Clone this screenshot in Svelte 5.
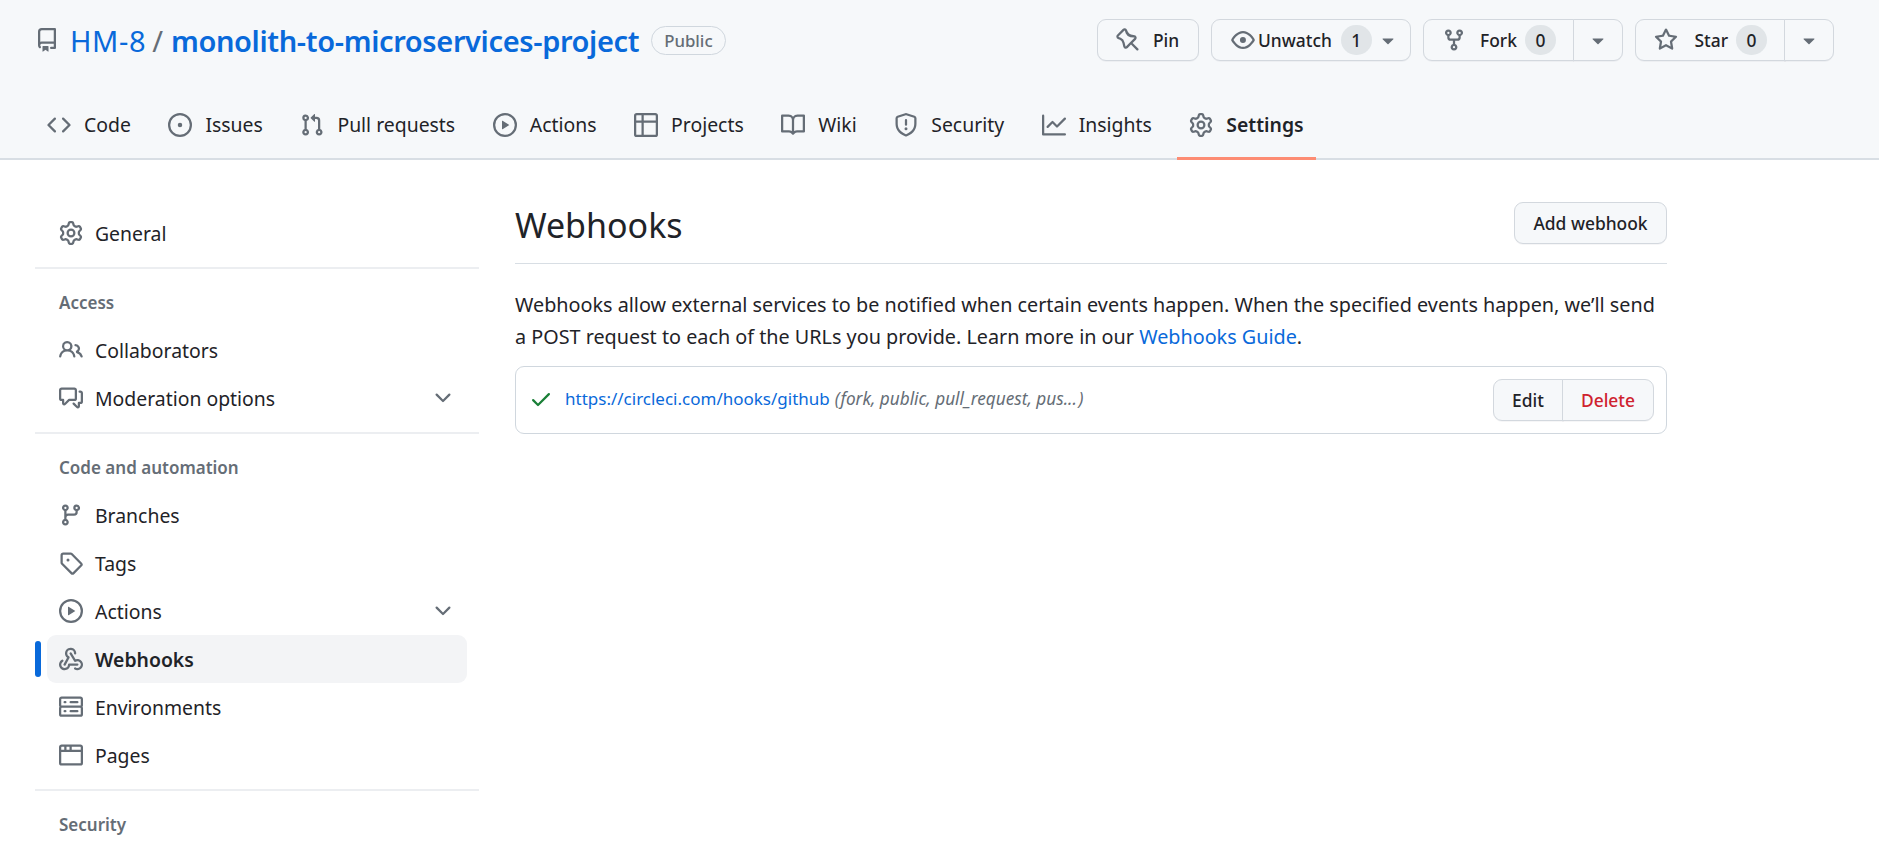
<script>
  const icons = {
    repo: 'M2 2.5A2.5 2.5 0 0 1 4.5 0h8.75a.75.75 0 0 1 .75.75v12.5a.75.75 0 0 1-.75.75h-2.5a.75.75 0 0 1 0-1.5h1.75v-2h-8a1 1 0 0 0-.714 1.7.75.75 0 1 1-1.072 1.05A2.495 2.495 0 0 1 2 11.5Zm10.5-1h-8a1 1 0 0 0-1 1v6.708A2.486 2.486 0 0 1 4.5 9h8ZM5 12.25a.25.25 0 0 1 .25-.25h3.5a.25.25 0 0 1 .25.25v3.25a.25.25 0 0 1-.4.2l-1.45-1.087a.249.249 0 0 0-.3 0L5.4 15.7a.25.25 0 0 1-.4-.2Z',
    code: 'm11.28 3.22 4.25 4.25a.75.75 0 0 1 0 1.06l-4.25 4.25a.749.749 0 0 1-1.275-.326.749.749 0 0 1 .215-.734L13.94 8l-3.72-3.72a.749.749 0 0 1 .326-1.275.749.749 0 0 1 .734.215Zm-6.56 0a.751.751 0 0 1 1.042.018.751.751 0 0 1 .018 1.042L2.06 8l3.72 3.72a.749.749 0 0 1-.326 1.275.749.749 0 0 1-.734-.215L.47 8.53a.75.75 0 0 1 0-1.06Z',
    issue: 'M8 9.5a1.5 1.5 0 1 0 0-3 1.5 1.5 0 0 0 0 3Z M8 0a8 8 0 1 1 0 16A8 8 0 0 1 8 0ZM1.5 8a6.5 6.5 0 1 0 13 0 6.5 6.5 0 0 0-13 0Z',
    pull: 'M1.5 3.25a2.25 2.25 0 1 1 3 2.122v5.256a2.251 2.251 0 1 1-1.5 0V5.372A2.25 2.25 0 0 1 1.5 3.25Zm5.677-.177L9.573.677A.25.25 0 0 1 10 .854V2.5h1A2.5 2.5 0 0 1 13.5 5v5.628a2.251 2.251 0 1 1-1.5 0V5a1 1 0 0 0-1-1h-1v1.646a.25.25 0 0 1-.427.177L7.177 3.427a.25.25 0 0 1 0-.354ZM3.75 2.5a.75.75 0 1 0 0 1.5.75.75 0 0 0 0-1.5Zm0 9.5a.75.75 0 1 0 0 1.5.75.75 0 0 0 0-1.5Zm8.25.75a.75.75 0 1 0 1.5 0 .75.75 0 0 0-1.5 0Z',
    play: 'M8 0a8 8 0 1 1 0 16A8 8 0 0 1 8 0ZM1.5 8a6.5 6.5 0 1 0 13 0 6.5 6.5 0 0 0-13 0Zm4.879-2.773 4.264 2.559a.25.25 0 0 1 0 .428l-4.264 2.559A.25.25 0 0 1 6 10.559V5.442a.25.25 0 0 1 .379-.215Z',
    table: 'M0 1.75C0 .784.784 0 1.75 0h12.5C15.216 0 16 .784 16 1.75v12.5A1.75 1.75 0 0 1 14.25 16H1.75A1.75 1.75 0 0 1 0 14.25ZM6.5 6.5v8h7.75a.25.25 0 0 0 .25-.25V6.5Zm8-1.5V1.75a.25.25 0 0 0-.25-.25H6.5V5Zm-13 1.5v7.75c0 .138.112.25.25.25H5v-8ZM5 5V1.5H1.75a.25.25 0 0 0-.25.25V5Z',
    book: 'M0 1.75A.75.75 0 0 1 .75 1h4.253c1.227 0 2.317.59 3 1.501A3.743 3.743 0 0 1 11.006 1h4.245a.75.75 0 0 1 .75.75v10.5a.75.75 0 0 1-.75.75h-4.507a2.25 2.25 0 0 0-1.591.659l-.622.621a.75.75 0 0 1-1.06 0l-.622-.621A2.25 2.25 0 0 0 5.258 13H.75a.75.75 0 0 1-.75-.75Zm7.251 10.324.004-5.073-.002-2.253A2.25 2.25 0 0 0 5.003 2.5H1.5v9h3.757a3.75 3.75 0 0 1 1.994.574ZM8.755 4.75l-.004 7.322a3.752 3.752 0 0 1 1.992-.572H14.5v-9h-3.495a2.25 2.25 0 0 0-2.25 2.25Z',
    shield: 'M7.467.133a1.748 1.748 0 0 1 1.066 0l5.25 1.68A1.75 1.75 0 0 1 15 3.48V7c0 1.566-.32 3.182-1.303 4.682-.983 1.498-2.585 2.813-5.032 3.855a1.697 1.697 0 0 1-1.33 0c-2.447-1.042-4.049-2.357-5.032-3.855C1.32 10.182 1 8.566 1 7V3.48a1.75 1.75 0 0 1 1.217-1.667Zm.61 1.429a.25.25 0 0 0-.153 0l-5.25 1.68a.25.25 0 0 0-.174.238V7c0 1.358.275 2.666 1.057 3.86.784 1.194 2.121 2.34 4.366 3.297a.196.196 0 0 0 .154 0c2.245-.956 3.582-2.104 4.366-3.298C13.225 9.666 13.5 8.36 13.5 7V3.48a.25.25 0 0 0-.174-.237l-5.25-1.68ZM8.75 4.75v3a.75.75 0 0 1-1.5 0v-3a.75.75 0 0 1 1.5 0ZM9 10.5a1 1 0 1 1-2 0 1 1 0 0 1 2 0Z',
    graph: 'M1.5 1.75V13.5h13.75a.75.75 0 0 1 0 1.5H.75a.75.75 0 0 1-.75-.75V1.75a.75.75 0 0 1 1.5 0Zm14.28 2.53-5.25 5.25a.75.75 0 0 1-1.06 0L7 7.06 4.28 9.78a.751.751 0 0 1-1.042-.018.751.751 0 0 1-.018-1.042l3.25-3.25a.75.75 0 0 1 1.06 0L10 7.94l4.72-4.72a.751.751 0 0 1 1.042.018.751.751 0 0 1 .018 1.042Z',
    gear: 'M8 0a8.2 8.2 0 0 1 .701.031C9.444.095 9.99.645 10.16 1.29l.288 1.107c.018.066.079.158.212.224.231.114.454.243.668.386.123.082.233.09.299.071l1.103-.303c.644-.176 1.392.021 1.82.63.27.385.506.792.704 1.218.315.675.111 1.422-.364 1.891l-.814.806c-.049.048-.098.147-.088.294.016.257.016.515 0 .772-.01.147.038.246.088.294l.814.806c.475.469.679 1.216.364 1.891a7.977 7.977 0 0 1-.704 1.217c-.428.61-1.176.807-1.82.63l-1.102-.302c-.067-.019-.177-.011-.3.071a5.909 5.909 0 0 1-.668.386c-.133.066-.194.158-.211.224l-.29 1.106c-.168.646-.715 1.196-1.458 1.26a8.006 8.006 0 0 1-1.402 0c-.743-.064-1.289-.614-1.458-1.26l-.289-1.106c-.018-.066-.079-.158-.212-.224a5.738 5.738 0 0 1-.668-.386c-.123-.082-.233-.09-.299-.071l-1.103.303c-.644.176-1.392-.021-1.82-.63a8.12 8.12 0 0 1-.704-1.218c-.315-.675-.111-1.422.363-1.891l.815-.806c.05-.048.098-.147.088-.294a6.214 6.214 0 0 1 0-.772c.01-.147-.038-.246-.088-.294l-.815-.806C.635 6.045.431 5.298.746 4.623a7.92 7.92 0 0 1 .704-1.217c.428-.61 1.176-.807 1.82-.63l1.102.302c.067.019.177.011.3-.071.214-.143.437-.272.668-.386.133-.066.194-.158.211-.224l.29-1.106C6.009.645 6.556.095 7.299.03 7.53.01 7.764 0 8 0Zm-.571 1.525c-.036.003-.108.036-.137.146l-.289 1.105c-.147.561-.549.967-.998 1.189-.173.086-.34.183-.5.29-.417.278-.97.423-1.529.27l-1.103-.303c-.109-.03-.175.016-.195.045-.22.312-.412.644-.573.99-.014.031-.021.11.059.19l.815.806c.411.406.562.957.53 1.456a4.709 4.709 0 0 0 0 .582c.032.499-.119 1.05-.53 1.456l-.815.806c-.081.08-.073.159-.059.19.162.346.353.677.573.989.02.03.085.076.195.046l1.102-.303c.56-.153 1.113-.008 1.53.27.161.107.328.204.501.29.447.222.85.629.997 1.189l.289 1.105c.029.109.101.143.137.146a6.6 6.6 0 0 0 1.142 0c.036-.003.108-.036.137-.146l.289-1.105c.147-.561.549-.967.998-1.189.173-.086.34-.183.5-.29.417-.278.97-.423 1.529-.27l1.103.303c.109.029.175-.016.195-.045.22-.313.411-.644.573-.99.014-.031.021-.11-.059-.19l-.815-.806c-.411-.406-.562-.957-.53-1.456a4.709 4.709 0 0 0 0-.582c-.032-.499.119-1.05.53-1.456l.815-.806c.081-.08.073-.159.059-.19a6.464 6.464 0 0 0-.573-.989c-.02-.03-.085-.076-.195-.046l-1.102.303c-.56.153-1.113.008-1.53-.27a4.44 4.44 0 0 0-.501-.29c-.447-.222-.85-.629-.997-1.189l-.289-1.105c-.029-.11-.101-.143-.137-.146a6.6 6.6 0 0 0-1.142 0ZM11 8a3 3 0 1 1-6 0 3 3 0 0 1 6 0ZM9.5 8a1.5 1.5 0 1 0-3.001.001A1.5 1.5 0 0 0 9.5 8Z',
    pin: 'M4.456.734a1.75 1.75 0 0 1 2.826.504l.613 1.327a3.081 3.081 0 0 0 2.084 1.707l2.454.584c1.332.317 1.8 1.972.832 2.94L11.06 10l3.72 3.72a.749.749 0 0 1-.326 1.275.749.749 0 0 1-.734-.215L10 11.06l-2.204 2.205c-.968.968-2.623.5-2.94-.832l-.584-2.454a3.081 3.081 0 0 0-1.707-2.084l-1.327-.613a1.75 1.75 0 0 1-.504-2.826L4.456.734ZM5.92 1.866a.25.25 0 0 0-.404-.072L1.794 5.516a.25.25 0 0 0 .072.404l1.328.613A4.582 4.582 0 0 1 5.73 9.63l.584 2.454a.25.25 0 0 0 .42.12l5.47-5.47a.25.25 0 0 0-.12-.42L9.63 6.13a4.58 4.58 0 0 1-3.098-2.537L5.92 1.866Z',
    eye: 'M8 2c1.981 0 3.671.992 4.933 2.078 1.27 1.091 2.187 2.345 2.637 3.023a1.62 1.62 0 0 1 0 1.798c-.45.678-1.367 1.932-2.637 3.023C11.67 13.008 9.981 14 8 14c-1.981 0-3.671-.992-4.933-2.078C1.797 10.83.88 9.576.43 8.898a1.62 1.62 0 0 1 0-1.798c.45-.677 1.367-1.931 2.637-3.022C4.33 2.992 6.019 2 8 2ZM1.679 7.932a.12.12 0 0 0 0 .136c.411.622 1.241 1.75 2.366 2.717C5.176 11.758 6.527 12.5 8 12.5c1.473 0 2.825-.742 3.955-1.715 1.124-.967 1.954-2.096 2.366-2.717a.12.12 0 0 0 0-.136c-.412-.621-1.242-1.75-2.366-2.717C10.824 4.242 9.473 3.5 8 3.5c-1.473 0-2.825.742-3.955 1.715-1.124.967-1.954 2.096-2.366 2.717ZM8 10a2 2 0 1 1-.001-3.999A2 2 0 0 1 8 10Z',
    fork: 'M5 5.372v.878c0 .414.336.75.75.75h4.5a.75.75 0 0 0 .75-.75v-.878a2.25 2.25 0 1 1 1.5 0v.878a2.25 2.25 0 0 1-2.25 2.25h-1.5v2.128a2.251 2.251 0 1 1-1.5 0V8.5h-1.5A2.25 2.25 0 0 1 3.5 6.25v-.878a2.25 2.25 0 1 1 1.5 0ZM5 3.25a.75.75 0 1 0-1.5 0 .75.75 0 0 0 1.5 0Zm6.75.75a.75.75 0 1 0 0-1.5.75.75 0 0 0 0 1.5Zm-3 8.75a.75.75 0 1 0-1.5 0 .75.75 0 0 0 1.5 0Z',
    star: 'M8 .25a.75.75 0 0 1 .673.418l1.882 3.815 4.21.612a.75.75 0 0 1 .416 1.279l-3.046 2.97.719 4.192a.751.751 0 0 1-1.088.791L8 12.347l-3.766 1.98a.75.75 0 0 1-1.088-.79l.72-4.194L.818 6.374a.75.75 0 0 1 .416-1.28l4.21-.611L7.327.668A.75.75 0 0 1 8 .25Zm0 2.445L6.615 5.5a.75.75 0 0 1-.564.41l-3.097.45 2.24 2.184a.75.75 0 0 1 .216.664l-.528 3.084 2.769-1.456a.75.75 0 0 1 .698 0l2.77 1.456-.53-3.084a.75.75 0 0 1 .216-.664l2.24-2.183-3.096-.45a.75.75 0 0 1-.564-.41L8 2.694Z',
    people: 'M2 5.5a3.5 3.5 0 1 1 5.898 2.549 5.508 5.508 0 0 1 3.034 4.084.75.75 0 1 1-1.482.235 4 4 0 0 0-7.9 0 .75.75 0 0 1-1.482-.236A5.507 5.507 0 0 1 3.102 8.05 3.493 3.493 0 0 1 2 5.5ZM11 4a3.001 3.001 0 0 1 2.22 5.018 5.01 5.01 0 0 1 2.56 3.012.749.749 0 0 1-.885.954.752.752 0 0 1-.549-.514 3.507 3.507 0 0 0-2.522-2.372.75.75 0 0 1-.574-.73v-.352a.75.75 0 0 1 .416-.672A1.5 1.5 0 0 0 11 5.5.75.75 0 0 1 11 4Zm-5.5-.5a2 2 0 1 0-.001 3.999A2 2 0 0 0 5.5 3.5Z',
    comments: 'M1.75 1h8.5c.966 0 1.75.784 1.75 1.75v5.5A1.75 1.75 0 0 1 10.25 10H7.061l-2.574 2.573A1.458 1.458 0 0 1 2 11.543V10h-.25A1.75 1.75 0 0 1 0 8.25v-5.5C0 1.784.784 1 1.75 1ZM1.5 2.75v5.5c0 .138.112.25.25.25h1a.75.75 0 0 1 .75.75v2.19l2.72-2.72a.749.749 0 0 1 .53-.22h3.5a.25.25 0 0 0 .25-.25v-5.5a.25.25 0 0 0-.25-.25h-8.5a.25.25 0 0 0-.25.25Zm13 2a.25.25 0 0 0-.25-.25h-.5a.75.75 0 0 1 0-1.5h.5c.966 0 1.75.784 1.75 1.75v5.5A1.75 1.75 0 0 1 14.25 12H14v1.543a1.458 1.458 0 0 1-2.487 1.03L9.22 12.28a.749.749 0 0 1 .326-1.275.749.749 0 0 1 .734.215l2.22 2.22v-2.19a.75.75 0 0 1 .75-.75h1a.25.25 0 0 0 .25-.25Z',
    branch: 'M9.5 3.25a2.25 2.25 0 1 1 3 2.122V6A2.5 2.5 0 0 1 10 8.5H6a1 1 0 0 0-1 1v1.128a2.251 2.251 0 1 1-1.5 0V5.372a2.25 2.25 0 1 1 1.5 0v1.836A2.493 2.493 0 0 1 6 7h4a1 1 0 0 0 1-1v-.628A2.25 2.25 0 0 1 9.5 3.25Zm-6 0a.75.75 0 1 0 1.5 0 .75.75 0 0 0-1.5 0Zm8.25-.75a.75.75 0 1 0 0 1.5.75.75 0 0 0 0-1.5ZM4.25 12a.75.75 0 1 0 0 1.5.75.75 0 0 0 0-1.5Z',
    tag: 'M1 7.775V2.75C1 1.784 1.784 1 2.75 1h5.025c.464 0 .91.184 1.238.513l6.25 6.25a1.75 1.75 0 0 1 0 2.474l-5.026 5.026a1.75 1.75 0 0 1-2.474 0l-6.25-6.25A1.752 1.752 0 0 1 1 7.775Zm1.5 0c0 .066.026.13.073.177l6.25 6.25a.25.25 0 0 0 .354 0l5.025-5.025a.25.25 0 0 0 0-.354l-6.25-6.25a.25.25 0 0 0-.177-.073H2.75a.25.25 0 0 0-.25.25ZM6 5a1 1 0 1 1 0 2 1 1 0 0 1 0-2Z',
    webhook: 'M5.5 4.25a2.25 2.25 0 0 1 4.5 0 .75.75 0 0 0 1.5 0 3.75 3.75 0 1 0-6.14 2.889l-2.272 4.258a.75.75 0 0 0 1.324.706L7 7.25a.75.75 0 0 0-.309-1.015A2.25 2.25 0 0 1 5.5 4.25Z M7.364 3.607a.75.75 0 0 1 1.03.257l2.608 4.349a3.75 3.75 0 1 1-.628 6.785.75.75 0 0 1 .752-1.299 2.25 2.25 0 1 0-.033-3.88.75.75 0 0 1-1.03-.256L7.107 4.636a.75.75 0 0 1 .257-1.03Z M2.9 8.776A.75.75 0 0 1 2.625 9.8 2.25 2.25 0 1 0 6 11.75a.75.75 0 0 1 .75-.751h5.5a.75.75 0 0 1 0 1.5H7.425a3.751 3.751 0 1 1-5.55-3.998.75.75 0 0 1 1.024.274Z',
    server: 'M1.75 1h12.5c.966 0 1.75.784 1.75 1.75v4c0 .372-.116.717-.314 1 .198.283.314.628.314 1v4a1.75 1.75 0 0 1-1.75 1.75H1.75A1.75 1.75 0 0 1 0 12.75v-4c0-.358.109-.707.314-1a1.739 1.739 0 0 1-.314-1v-4C0 1.784.784 1 1.75 1ZM1.5 2.75v4c0 .138.112.25.25.25h12.5a.25.25 0 0 0 .25-.25v-4a.25.25 0 0 0-.25-.25H1.75a.25.25 0 0 0-.25.25Zm.25 5.75a.25.25 0 0 0-.25.25v4c0 .138.112.25.25.25h12.5a.25.25 0 0 0 .25-.25v-4a.25.25 0 0 0-.25-.25ZM7 4.75A.75.75 0 0 1 7.75 4h4.5a.75.75 0 0 1 0 1.5h-4.5A.75.75 0 0 1 7 4.75ZM7.75 10h4.5a.75.75 0 0 1 0 1.5h-4.5a.75.75 0 0 1 0-1.5ZM3 4.75A.75.75 0 0 1 3.75 4h.5a.75.75 0 0 1 0 1.5h-.5A.75.75 0 0 1 3 4.75ZM3.75 10h.5a.75.75 0 0 1 0 1.5h-.5a.75.75 0 0 1 0-1.5Z',
    browser: 'M0 2.75C0 1.784.784 1 1.75 1h12.5c.966 0 1.75.784 1.75 1.75v10.5A1.75 1.75 0 0 1 14.25 15H1.75A1.75 1.75 0 0 1 0 13.25ZM14.5 6h-13v7.25c0 .138.112.25.25.25h12.5a.25.25 0 0 0 .25-.25Zm-6-3.5v2h6V2.75a.25.25 0 0 0-.25-.25ZM5 2.5v2h2v-2Zm-3.25 0a.25.25 0 0 0-.25.25V4.5h2v-2Z',
    chevron: 'M12.78 5.22a.749.749 0 0 1 0 1.06l-4.25 4.25a.749.749 0 0 1-1.06 0L3.22 6.28a.749.749 0 1 1 1.06-1.06L8 8.939l3.72-3.719a.749.749 0 0 1 1.06 0Z',
    check: 'M13.78 4.22a.75.75 0 0 1 0 1.06l-7.25 7.25a.75.75 0 0 1-1.06 0L2.22 9.28a.751.751 0 0 1 .018-1.042.751.751 0 0 1 1.042-.018L6 10.94l6.72-6.72a.75.75 0 0 1 1.06 0Z',
    caret: 'm4.427 7.427 3.396 3.396a.25.25 0 0 0 .354 0l3.396-3.396A.25.25 0 0 0 11.396 7H4.604a.25.25 0 0 0-.177.427Z'
  };

  const tabs = [
    { label: 'Code', icon: 'code' },
    { label: 'Issues', icon: 'issue' },
    { label: 'Pull requests', icon: 'pull' },
    { label: 'Actions', icon: 'play' },
    { label: 'Projects', icon: 'table' },
    { label: 'Wiki', icon: 'book' },
    { label: 'Security', icon: 'shield' },
    { label: 'Insights', icon: 'graph' },
    { label: 'Settings', icon: 'gear', active: true }
  ];

  const sections = [
    { items: [{ label: 'General', icon: 'gear' }] },
    {
      title: 'Access',
      items: [
        { label: 'Collaborators', icon: 'people' },
        { label: 'Moderation options', icon: 'comments', more: true }
      ]
    },
    {
      title: 'Code and automation',
      items: [
        { label: 'Branches', icon: 'branch' },
        { label: 'Tags', icon: 'tag' },
        { label: 'Actions', icon: 'play', more: true },
        { label: 'Webhooks', icon: 'webhook', active: true },
        { label: 'Environments', icon: 'server' },
        { label: 'Pages', icon: 'browser' }
      ]
    },
    { title: 'Security', items: [] }
  ];
</script>

{#snippet icon(name, size = 24)}
  <svg class="icon" width={size} height={size} viewBox="0 0 16 16" aria-hidden="true"><path d={icons[name]} /></svg>
{/snippet}

<div class="page">
  <header class="repohead">
    <div class="titlebar">
      <div class="title">
        {@render icon('repo')}
        <a class="owner" href="#owner">HM-8</a>
        <span class="slash">/</span>
        <a class="repo" href="#repo">monolith-to-microservices-project</a>
        <span class="label">Public</span>
      </div>
      <div class="actions">
        <button class="btn pin">{@render icon('pin')}<span>Pin</span></button>
        <button class="btn watch">{@render icon('eye')}<span>Unwatch</span><span class="count">1</span>{@render icon('caret')}</button>
        <div class="split">
          <button class="btn main">{@render icon('fork')}<span>Fork</span><span class="count">0</span></button>
          <button class="btn drop">{@render icon('caret')}</button>
        </div>
        <div class="split">
          <button class="btn main star">{@render icon('star')}<span>Star</span><span class="count">0</span></button>
          <button class="btn drop">{@render icon('caret')}</button>
        </div>
      </div>
    </div>
    <nav class="tabs">
      {#each tabs as t}
        <a class="tab" class:active={t.active} href="#tab">
          {@render icon(t.icon)}
          <span>{t.label}</span>
        </a>
      {/each}
    </nav>
  </header>

  <div class="layout">
    <aside class="side">
      {#each sections as s, i}
        {#if i > 0}<div class="rule"></div>{/if}
        {#if s.title}<h3>{s.title}</h3>{/if}
        {#each s.items as item}
          <a class="item" class:active={item.active} href="#item">
            {@render icon(item.icon)}
            <span class="grow">{item.label}</span>
            {#if item.more}{@render icon('chevron')}{/if}
          </a>
        {/each}
      {/each}
    </aside>

    <main class="content">
      <div class="subhead">
        <h2>Webhooks</h2>
        <button class="btn add">Add webhook</button>
      </div>
      <p>Webhooks allow external services to be notified when certain events happen. When the specified events happen, we’ll send a POST request to each of the URLs you provide. Learn more in our <a href="#guide">Webhooks Guide</a>.</p>
      <div class="hook">
        <span class="ok">{@render icon('check')}</span>
        <a class="url" href="#hook">https://circleci.com/hooks/github</a>
        <em>(fork, public, pull_request, pus...&#8202;)</em>
        <div class="group">
          <button class="btn edit">Edit</button>
          <button class="btn del">Delete</button>
        </div>
      </div>
    </main>
  </div>
</div>

<style>
  :global(body) {
    margin: 0;
    background: #fff;
  }

  .page {
    height: 846px;
    overflow: hidden;
    font-family: "Noto Sans", "Liberation Sans", sans-serif;
    font-size: 19.4px;
    color: #1f2328;
  }

  a {
    text-decoration: none;
  }

  .icon {
    flex: none;
    fill: #656d76;
  }

  /* repo header */
  .repohead {
    background: #f6f8fa;
    height: 158px;
    border-bottom: 2px solid #d8dee4;
    padding: 0 35px;
  }

  .titlebar {
    display: flex;
    justify-content: space-between;
    align-items: center;
    height: 80px;
    padding-right: 10px;
  }

  .title {
    display: flex;
    align-items: center;
  }

  .title > .icon {
    margin: 0 11px 0 0;
  }

  .owner, .repo {
    font-size: 29px;
    color: #0969da;
  }

  .owner {
    letter-spacing: 0.6px;
  }

  .repo {
    font-weight: 600;
    letter-spacing: -0.36px;
  }

  .slash {
    font-size: 29px;
    color: #656d76;
    margin: 0 8px 0 6px;
  }

  .label {
    margin-left: 12px;
    font-size: 16.8px;
    font-weight: 500;
    color: #656d76;
    border: 1.5px solid #d0d7de;
    border-radius: 30px;
    padding: 0 12px;
    line-height: 27px;
  }

  .actions {
    display: flex;
    gap: 12px;
  }

  .btn {
    display: flex;
    align-items: center;
    justify-content: center;
    height: 42px;
    box-sizing: border-box;
    padding: 0;
    background: #f6f8fa;
    border: 1.5px solid #d3d8de;
    border-radius: 9px;
    box-shadow: 0 1px 0 rgba(31, 35, 40, 0.04);
    font-family: inherit;
    font-size: 17.4px;
    font-weight: 500;
    color: #1f2328;
  }

  .pin {
    width: 102px;
    justify-content: flex-start;
    padding-left: 18px;
    gap: 13px;
  }

  .watch {
    width: 200px;
    justify-content: flex-start;
    padding-left: 19px;
    gap: 3px;
  }

  .split {
    display: flex;
  }

  .main {
    width: 151px;
    justify-content: flex-start;
    padding-left: 18px;
    border-radius: 9px 0 0 9px;
    gap: 14px;
  }

  .star {
    gap: 17px;
  }

  .main .count {
    margin-left: -6px;
  }

  .star .count {
    margin-left: -9px;
  }

  .drop {
    width: 50px;
    margin-left: -1.5px;
    border-radius: 0 9px 9px 0;
  }

  .count {
    background: rgba(175, 184, 193, 0.3);
    border-radius: 30px;
    min-width: 31px;
    text-align: center;
    line-height: 30px;
    font-weight: 500;
  }

  .watch .count {
    margin: 0 1px 0 6px;
  }

  /* tabs */
  .tabs {
    display: flex;
    gap: 13.6px;
    height: 78px;
  }

  .tab {
    display: flex;
    align-items: center;
    gap: 13px;
    padding: 21px 12px 0;
    height: 68px;
    box-sizing: border-box;
    color: #1f2328;
    position: relative;
  }

  .tab.active {
    font-weight: 600;
  }

  .tab.active::after {
    content: "";
    position: absolute;
    left: 0;
    right: 0;
    bottom: -12px;
    height: 3px;
    background: #fd8c73;
  }

  /* page body */
  .layout {
    display: flex;
    padding: 0 35px;
  }

  .side {
    width: 444px;
    flex: none;
    padding-top: 49px;
  }

  .rule {
    height: 1.5px;
    background: #eceef1;
    margin: 10px 0 11px;
  }

  h3 {
    margin: 0;
    padding-left: 24px;
    font-size: 17px;
    font-weight: 600;
    line-height: 45px;
    height: 46.5px;
    color: #656d76;
  }

  .item {
    display: flex;
    align-items: center;
    gap: 12px;
    height: 48px;
    width: 420px;
    margin-left: 12px;
    padding: 0 12px;
    box-sizing: border-box;
    border-radius: 9px;
    color: #1f2328;
    position: relative;
  }

  .item.active {
    background: #f3f4f6;
    font-weight: 600;
  }

  .item.active::before {
    content: "";
    position: absolute;
    left: -12px;
    top: 6px;
    width: 6px;
    height: 36px;
    border-radius: 6px;
    background: #0969da;
  }

  .grow {
    flex: 1;
  }

  .content {
    width: 1152px;
    margin-left: 36px;
    padding-top: 42px;
  }

  .subhead {
    display: flex;
    justify-content: space-between;
    align-items: flex-start;
    height: 61px;
    border-bottom: 1.5px solid #d8dee4;
  }

  h2 {
    margin: 0;
    font-size: 34px;
    line-height: 46px;
    font-weight: 400;
  }

  .add {
    width: 153px;
  }

  p {
    margin: 25px 0 13.5px;
    font-size: 19.8px;
    line-height: 31.5px;
  }

  p a, .url {
    color: #0969da;
  }

  .hook {
    display: flex;
    align-items: center;
    height: 68px;
    box-sizing: border-box;
    border: 1.5px solid #d0d7de;
    border-radius: 9px;
    padding: 0 12px 0 13px;
    font-size: 17px;
  }

  .url, em {
    padding-bottom: 3px;
  }

  .ok {
    display: flex;
    margin-right: 12px;
    padding-bottom: 2px;
  }

  .ok .icon {
    fill: #1a7f37;
  }

  em {
    margin-left: 5px;
    font-size: 17.2px;
    color: #656d76;
  }

  .group {
    display: flex;
    margin-left: auto;
  }

  .edit {
    width: 71px;
    border-radius: 9px 0 0 9px;
  }

  .del {
    width: 92px;
    margin-left: -1.5px;
    border-radius: 0 9px 9px 0;
    color: #cf222e;
  }
</style>
